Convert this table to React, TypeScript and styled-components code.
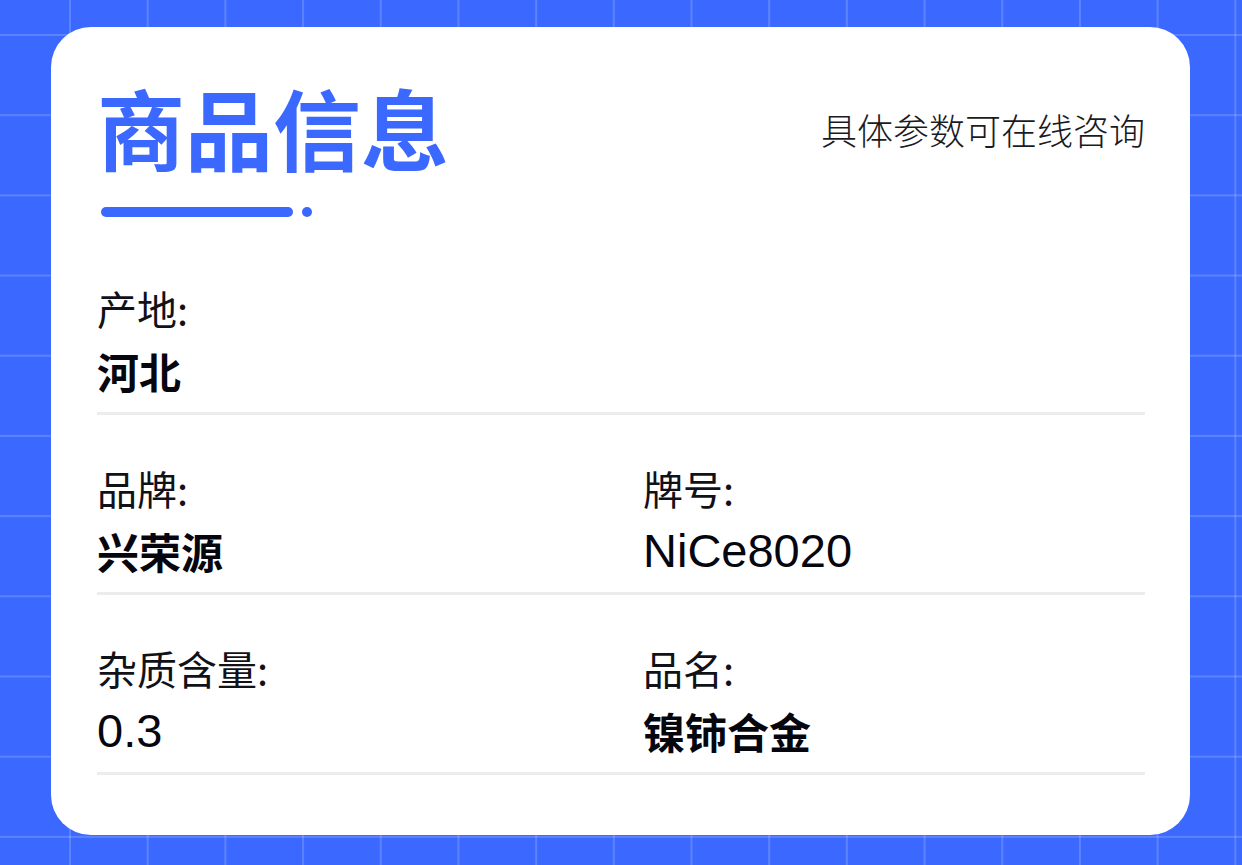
import React from "react";
import styled, { createGlobalStyle } from "styled-components";

const GlobalStyle = createGlobalStyle`
  html, body {
    margin: 0;
    padding: 0;
  }
  body {
    font-family: "Liberation Sans", "Noto Sans CJK SC", sans-serif;
    background-color: #3b69ff;
    background-image:
      linear-gradient(to right, rgba(255, 255, 255, 0.17) 2px, transparent 2px),
      linear-gradient(to bottom, rgba(255, 255, 255, 0.17) 2px, transparent 2px);
    background-size: 77.7px 80.2px;
    background-position: 69px 34px;
  }
`;

const Page = styled.div`
  width: 1242px;
  height: 865px;
  box-sizing: border-box;
  padding: 27px 52px 30px 51px;
  display: flex;
`;

const Card = styled.div`
  flex: 1;
  background: #fff;
  border-radius: 40px;
  padding: 55px 45px 0 46px;
  display: flex;
  flex-direction: column;
`;

const Header = styled.div`
  display: flex;
  justify-content: space-between;
  align-items: center;
`;

const Title = styled.h1`
  margin: 0;
  font-family: "Noto Sans CJK SC", sans-serif;
  font-size: 88px;
  line-height: 88px;
  font-weight: 700;
  color: #3b69ff;
`;

const Hint = styled.div`
  font-family: "Noto Sans CJK SC", sans-serif;
  font-size: 36px;
  line-height: 36px;
  font-weight: 300;
  color: #1a1a24;
  margin-top: 6px;
`;

const Underline = styled.div`
  display: flex;
  align-items: center;
  gap: 9px;
  margin: 37px 0 0 4px;
`;

const Bar = styled.span`
  width: 192px;
  height: 10px;
  border-radius: 5px;
  background: #3b69ff;
`;

const Dot = styled.span`
  width: 10px;
  height: 10px;
  border-radius: 50%;
  background: #3b69ff;
`;

const Rows = styled.div`
  margin-top: 18px;
`;

const Row = styled.div`
  display: grid;
  grid-template-columns: 1fr 1fr;
  column-gap: 44px;
  padding: 53px 0 16px;
  border-bottom: 3px solid #ececee;
`;

const Field = styled.div`
  display: flex;
  flex-direction: column;
  gap: 18px;
`;

const Label = styled.div`
  font-size: 40px;
  line-height: 40px;
  font-weight: 400;
  color: #111118;
  font-family: "Noto Sans CJK SC", sans-serif;
`;

const Value = styled.div<{ $latin?: boolean }>`
  height: 50px;
  line-height: 50px;
  color: #06060f;
  font-family: ${(p) => (p.$latin ? '"Liberation Sans", sans-serif' : '"Noto Sans CJK SC", sans-serif')};
  font-size: ${(p) => (p.$latin ? "47px" : "42px")};
  font-weight: ${(p) => (p.$latin ? 400 : 700)};
`;

type Item = { label: string; value: string; latin?: boolean };

const rows: Item[][] = [
  [{ label: "产地:", value: "河北" }],
  [
    { label: "品牌:", value: "兴荣源" },
    { label: "牌号:", value: "NiCe8020", latin: true },
  ],
  [
    { label: "杂质含量:", value: "0.3", latin: true },
    { label: "品名:", value: "镍铈合金" },
  ],
];

export default function App() {
  return (
    <>
      <GlobalStyle />
      <Page>
        <Card>
          <Header>
            <Title>商品信息</Title>
            <Hint>具体参数可在线咨询</Hint>
          </Header>
          <Underline>
            <Bar />
            <Dot />
          </Underline>
          <Rows>
            {rows.map((row, i) => (
              <Row key={i}>
                {row.map((item) => (
                  <Field key={item.label}>
                    <Label>{item.label}</Label>
                    <Value $latin={item.latin}>{item.value}</Value>
                  </Field>
                ))}
              </Row>
            ))}
          </Rows>
        </Card>
      </Page>
    </>
  );
}
